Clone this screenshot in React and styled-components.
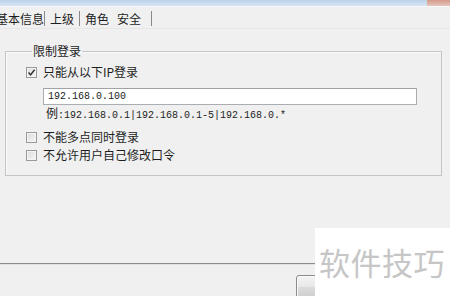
import React from "react";
import styled, { createGlobalStyle } from "styled-components";

const Global = createGlobalStyle`
  html, body { margin: 0; padding: 0; background: #f0f0f0; }
  body { font-family: "Noto Sans CJK SC", "Noto Sans", sans-serif; }
  * { box-sizing: border-box; }
`;

const Page = styled.div`
  position: relative;
  width: 450px;
  height: 296px;
  overflow: hidden;
  display: flex;
  flex-direction: column;
  background: #f0f0f0;
  color: #222;
  font-size: 12px;
`;

const TitleStrip = styled.div`
  height: 7px;
  display: flex;
  background: linear-gradient(to bottom, #bcd2ea, #d7e5f4);
  border-bottom: 1px solid #f7f8fa;
  flex-shrink: 0;
`;

const CloseHint = styled.div`
  margin-left: auto;
  width: 23px;
  background: linear-gradient(to bottom, #d49a8a, #e6c6bc);
`;

const TabBar = styled.div`
  height: 20px;
  margin-top: 2px;
  margin-left: -4px;
  display: flex;
  align-items: center;
  flex-shrink: 0;
  border-bottom: 1px solid #e6e6e6;
`;

const Tab = styled.span`
  line-height: 16px;
  padding: ${(p) => (p.$active ? "0 5px 0 8px" : "0")};
  color: #1e1e1e;
  white-space: nowrap;
`;

const TabSep = styled.span`
  width: 1px;
  height: 15px;
  background: #8a8a8a;
  margin: 0 5px 0 ${(p) => (p.$tight ? 0 : 5)}px;
`;

const Body = styled.div`
  margin-top: 14px;
  padding-left: 5px;
  flex-shrink: 0;
`;

const Group = styled.fieldset`
  margin: 0;
  width: 437px;
  padding: 5px 0 12px 20px;
  border: 1px solid #c3c6c8;
  box-shadow: inset 1px 1px 0 #fbfbfb;
  min-width: 0;
`;

const Legend = styled.legend`
  margin-left: 6px;
  padding: 0 1px;
  line-height: 16px;
  color: #1e1e1e;
`;

const OptionRow = styled.div`
  display: flex;
  align-items: center;
  gap: 6px;
  height: 16px;
  margin-top: ${(p) => p.$mt || 0}px;
`;

const Box = styled.span`
  width: 11px;
  height: 11px;
  border: 1px solid #9a9a9a;
  background: linear-gradient(135deg, #dcdcdc, #f7f7f7);
  box-shadow: inset 0 0 0 1px #f4f4f4;
  display: flex;
  align-items: center;
  justify-content: center;
`;

const Label = styled.span`
  line-height: 16px;
  color: #1e1e1e;
  white-space: nowrap;
`;

const Mono = styled.span`
  font-family: "Liberation Mono", "DejaVu Sans Mono", monospace;
  font-size: 10px;
`;

const IpInput = styled.div`
  margin: 8px 0 0 17px;
  width: 374px;
  height: 17px;
  border: 1px solid #abadb3;
  border-top-color: #a0a2a8;
  background: #fff;
  display: flex;
  align-items: center;
  padding-left: 4px;
  font-family: "Liberation Mono", "DejaVu Sans Mono", monospace;
  font-size: 10px;
  color: #222;
`;

const Hint = styled.div`
  margin-left: 20px;
  line-height: 16px;
  color: #1e1e1e;
  white-space: nowrap;
`;

const Spacer = styled.div`
  flex: 1;
`;

const Footer = styled.div`
  height: 33px;
  flex-shrink: 0;
  overflow: hidden;
`;

const Rule = styled.div`
  height: 1px;
  background: #8c8c8c;
  box-shadow: 0 -1px 0 #dadada, 0 1px 0 #e2e2e2;
`;

const ButtonRow = styled.div`
  padding: 11px 0 0 296px;
`;

const Button = styled.div`
  width: 75px;
  height: 23px;
  border: 1px solid #8a8a8a;
  border-radius: 3px;
  background: linear-gradient(to bottom, #f4f4f4, #e8e8e8 50%, #dcdcdc 51%, #cfcfcf);
  box-shadow: inset 0 0 0 1px #fbfbfb;
`;

const Watermark = styled.div`
  position: absolute;
  right: 0;
  bottom: 0;
  width: 135px;
  height: 68px;
  background: #fff;
  display: flex;
  align-items: center;
  padding: 0 0 2px 4px;
  font-family: "Noto Sans CJK SC", sans-serif;
  font-size: 31px;
  color: #c6c6c6;
  letter-spacing: 0.5px;
  white-space: nowrap;
`;

const Check = ({ checked }) => (
  <Box>
    {checked && (
      <svg width="9" height="9" viewBox="0 0 9 9">
        <path d="M1.5 4.5 L3.6 6.8 L7.6 1.8" fill="none" stroke="#333" strokeWidth="1.4" />
      </svg>
    )}
  </Box>
);

export default function App() {
  return (
    <>
      <Global />
      <Page>
        <TitleStrip>
          <CloseHint />
        </TitleStrip>
        <TabBar>
          <Tab>基本信息</Tab>
          <TabSep $tight />
          <Tab>上级</Tab>
          <TabSep />
          <Tab>角色</Tab>
          <Tab $active>安全</Tab>
          <TabSep />
        </TabBar>
        <Body>
          <Group>
            <Legend>限制登录</Legend>
            <OptionRow>
              <Check checked />
              <Label>只能从以下IP登录</Label>
            </OptionRow>
            <IpInput>192.168.0.100</IpInput>
            <Hint>
              例<Mono>:192.168.0.1|192.168.0.1-5|192.168.0.*</Mono>
            </Hint>
            <OptionRow $mt={5}>
              <Check />
              <Label>不能多点同时登录</Label>
            </OptionRow>
            <OptionRow $mt={2}>
              <Check />
              <Label>不允许用户自己修改口令</Label>
            </OptionRow>
          </Group>
        </Body>
        <Spacer />
        <Footer>
          <Rule />
          <ButtonRow>
            <Button />
          </ButtonRow>
        </Footer>
        <Watermark>软件技巧</Watermark>
      </Page>
    </>
  );
}
